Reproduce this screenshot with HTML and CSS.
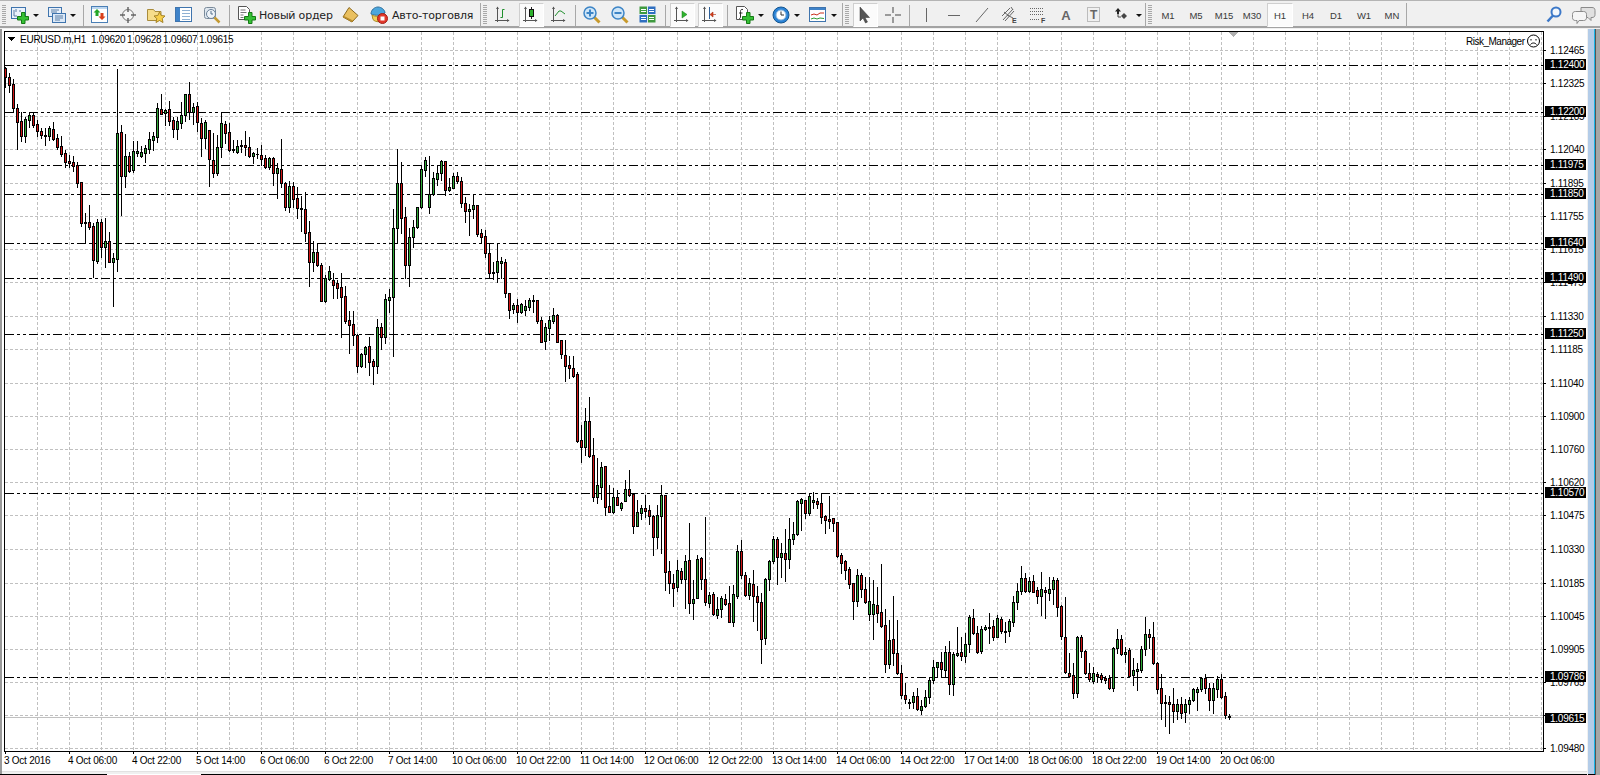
FILE: index.html
```html
<!DOCTYPE html>
<html lang="ru">
<head>
<meta charset="utf-8">
<title>EURUSD.m,H1</title>
<link rel="stylesheet" href="styles.css">
</head>
<body>
<svg class="defs" aria-hidden="true">
  <defs>
    <path id="plus" d="M10.500 6.500h3.500v4h3.500v3.500h-3.500v3.500h-3.500v-3.500h-4v-3.500h4z" fill="#35c035" stroke="#157a15"/>
    <symbol id="i-new" viewBox="0 0 18 18"><rect x="0.500" y="1.500" width="14" height="11" fill="#eaf2fb" stroke="#3f74ad"/><path d="M3 4v6h3M5 3v3M9 4v2" fill="none" stroke="#5b7fa5"/><use href="#plus"/></symbol>
    <symbol id="i-prof" viewBox="0 0 18 18"><rect x="0.500" y="1.500" width="13" height="9" fill="#e6effa" stroke="#3f74ad"/><rect x="4.500" y="7.500" width="13" height="9" fill="#dbe8f7" stroke="#3f74ad"/><path d="M3 4h8M3 6h6M7 10h8M7 12h8M7 14h5" stroke="#5b7fa5"/></symbol>
    <symbol id="i-watch" viewBox="0 0 18 18"><rect x="0.500" y="0.500" width="16" height="16" fill="#fff" stroke="#4a7fb5"/><path d="M1 1h15v2H1z" fill="#bcd6f0"/><path d="M6 3l3.500 3.500H7.500V10h-3V6.500h-2z" fill="#26a626"/><path d="M11 14l-3.500-3.500h2V7h3v3.500h2z" fill="#d9401a"/></symbol>
    <symbol id="i-nav" viewBox="0 0 18 18"><circle cx="9" cy="9" r="5.500" fill="#f6f6f6" stroke="#777"/><path d="M9 1v5M9 12v5M1 9h5M12 9h5" stroke="#666" stroke-width="1.500"/></symbol>
    <symbol id="i-fav" viewBox="0 0 18 18"><path d="M.5 3.500h6l1.500 2h6v9H.5z" fill="#f6dd8a" stroke="#a98c3c"/><path d="M12.500 6l1.700 3.500 3.800.5-2.800 2.600.8 3.900-3.500-2-3.500 2 .8-3.900L7 10l3.800-.5z" fill="#f7cf4a" stroke="#a58326"/></symbol>
    <symbol id="i-term" viewBox="0 0 18 18"><rect x="0.500" y="1.500" width="16" height="14" fill="#fff" stroke="#3f74ad"/><rect x="1" y="2" width="4" height="13" fill="#3f83c9"/><path d="M7 4.500h8M7 7.500h8M7 10.500h8M7 13.500h8" stroke="#8fb0d2"/></symbol>
    <symbol id="i-test" viewBox="0 0 18 18"><rect x="1.500" y="1.500" width="11" height="11" rx="2" fill="#dfe7ef" stroke="#7a8a9a"/><circle cx="8" cy="8" r="4.500" fill="#eef3f8" stroke="#6b8098"/><path d="M8 5v3h2" stroke="#56708c" fill="none"/><path d="M11.500 11.500l5 5" stroke="#c49a32" stroke-width="2.500"/></symbol>
    <symbol id="i-order" viewBox="0 0 18 18"><path d="M.5.500h8l3 3v10H.5z" fill="#fff" stroke="#555"/><path d="M2.500 4h5M2.500 6.500h6M2.500 9h3M2.500 11.500h3" stroke="#777"/><use href="#plus"/></symbol>
    <symbol id="i-gold" viewBox="0 0 18 18"><path d="M7 1.500l9 8-6 6.500-9-5z" fill="#eac060" stroke="#8d6a1e"/><path d="M1 11l9 5 1-1.500-9-4.500z" fill="#b98d2c"/></symbol>
    <symbol id="i-auto" viewBox="0 0 18 18"><path d="M1 8c0-4 3.500-7 7-7s7 3 7 6c-3 2.500-10 3-14 1z" fill="#4ca6dc" stroke="#2d6f9d"/><path d="M2 9c3 2 8 1.500 12-.5l.5 5c-3 3-9 3-11.500 0z" fill="#f1cf58" stroke="#a88a25"/><circle cx="12.500" cy="12.500" r="5" fill="#e2382b" stroke="#a21d15"/><rect x="10.500" y="10.500" width="4" height="4" fill="#fff"/></symbol>
    <g id="axes"><path d="M3.500 1v15M1 14.500h14" stroke="#555" fill="none"/><path d="M2 3l1.500-2.500L5 3zM13 13l2.500 1.500L13 16z" fill="#555"/></g>
    <symbol id="i-bars" viewBox="0 0 18 18"><use href="#axes"/><path d="M8.500 3.500v8M6.500 11.500h2M8.500 3.500h2" stroke="#1f8f2c" fill="none"/></symbol>
    <symbol id="i-candle" viewBox="0 0 18 18"><use href="#axes"/><path d="M9.500 1v12" stroke="#222"/><rect x="7.500" y="3.500" width="4" height="7" fill="#2fb32f" stroke="#111"/></symbol>
    <symbol id="i-line" viewBox="0 0 18 18"><use href="#axes"/><path d="M5 10l4-5 2 0 4 3" stroke="#1f8f2c" fill="none"/></symbol>
    <symbol id="i-zin" viewBox="0 0 18 18"><path d="M10.500 10.500l6 6" stroke="#c89a2c" stroke-width="3"/><circle cx="7" cy="7" r="6" fill="#cfe6f8" stroke="#3d85c6" stroke-width="1.500"/><path d="M3.500 7h7M7 3.500v7" stroke="#3d85c6" stroke-width="2"/></symbol>
    <symbol id="i-zout" viewBox="0 0 18 18"><path d="M10.500 10.500l6 6" stroke="#c89a2c" stroke-width="3"/><circle cx="7" cy="7" r="6" fill="#cfe6f8" stroke="#3d85c6" stroke-width="1.500"/><path d="M3.500 7h7" stroke="#3d85c6" stroke-width="2"/></symbol>
    <symbol id="i-tile" viewBox="0 0 18 18"><rect x="0.500" y="0.500" width="8" height="8" fill="#3f9a3f"/><rect x="8.500" y="0.500" width="8" height="8" fill="#2f6fc0"/><rect x="0.500" y="8.500" width="8" height="8" fill="#2f6fc0"/><rect x="8.500" y="8.500" width="8" height="8" fill="#3f9a3f"/><path d="M2 5.500h5M10 5.500h5M2 13.500h5M10 13.500h5M2 3.500h5M10 3.500h5M2 11.500h5M10 11.500h5" stroke="#fff"/><path d="M8.500 0v17M0 8.500h17" stroke="#dfe8f0"/></symbol>
    <symbol id="i-scroll" viewBox="0 0 18 18"><use href="#axes"/><path d="M9 5l5 3.500L9 12z" fill="#2fb32f" stroke="#157a15" stroke-width=".5"/></symbol>
    <symbol id="i-shift" viewBox="0 0 18 18"><use href="#axes"/><path d="M8.500 1v12" stroke="#2d5f98"/><path d="M15 8.500h-3V6l-3 2.500L12 11V8.500" fill="#d6401c" stroke="#a82a10" stroke-width=".6"/></symbol>
    <symbol id="i-ind" viewBox="0 0 18 18"><path d="M.5.500h8l3 3v10H.5z" fill="#fff" stroke="#555"/><path d="M7 3.500c-2-.5-2.500.5-2.500 2v5.500c0 1-.5 1.500-1.500 1.500M3 7h3.500" fill="none" stroke="#333"/><use href="#plus"/></symbol>
    <symbol id="i-clock" viewBox="0 0 18 18"><circle cx="9" cy="9" r="8" fill="#2b83d6" stroke="#14558f"/><circle cx="9" cy="9" r="5" fill="#fff" stroke="#8ab6dc"/><path d="M9 5.500V9h3" fill="none" stroke="#333"/></symbol>
    <symbol id="i-tmpl" viewBox="0 0 18 18"><rect x="0.500" y="1.500" width="16" height="14" fill="#fff" stroke="#3f74ad"/><rect x="1" y="2" width="15" height="2" fill="#3f83c9"/><path d="M2 9l3-1 3 1 3-2 4 0" fill="none" stroke="#c9301c"/><path d="M2 13l3-1 3 1 3-1 4 .5" fill="none" stroke="#2e9a36"/></symbol>
    <symbol id="i-cursor" viewBox="0 0 18 18"><path d="M4 1v14l3-3 2.500 5 2-1-2.500-4.500h4.500z" fill="#555" stroke="#333" stroke-width=".5"/></symbol>
    <symbol id="i-cross" viewBox="0 0 18 18"><path d="M9 1v6M9 11v6M1 9h6M11 9h6" stroke="#444" fill="none"/></symbol>
    <symbol id="i-vline" viewBox="0 0 18 18"><path d="M9.500 2v14" stroke="#666"/></symbol>
    <symbol id="i-hline" viewBox="0 0 18 18"><path d="M3 9.500h12" stroke="#666"/></symbol>
    <symbol id="i-trend" viewBox="0 0 18 18"><path d="M3 16L15 2" stroke="#666"/></symbol>
    <symbol id="i-chan" viewBox="0 0 18 18"><path d="M1 10l8-8M2 14l10-11M4 15l9-10M6 9l6 3M3 6l5 4M10 1l2 3" stroke="#666" fill="none"/><text class="icon-letter" x="11" y="17">E</text></symbol>
    <symbol id="i-fibo" viewBox="0 0 18 18"><path d="M1 2.500h14M1 5.500h14M1 8.500h14M1 13.500h10" stroke="#666" stroke-dasharray="1 1"/><text class="icon-letter" x="12" y="17">F</text></symbol>
    <symbol id="i-ttext" viewBox="0 0 18 18"><rect x="2.500" y="1.500" width="12" height="14" fill="none" stroke="#888" stroke-dasharray="1 1"/><text class="icon-t" x="5" y="13">T</text></symbol>
    <symbol id="i-arrows" viewBox="0 0 18 18"><path d="M3 1l3 3.500H4V7H2V4.500H0z" fill="#222" transform="translate(1 1)"/><path d="M8 7l3 3-3 3-3-3z" fill="#444" transform="translate(2)"/><path d="M3 8v3h3" stroke="#444" fill="none" transform="translate(1)"/></symbol>
    <symbol id="i-search" viewBox="0 0 18 18"><circle cx="11" cy="6" r="4.500" fill="#f2f7fc" stroke="#3c78c8" stroke-width="2"/><path d="M8 9.500L2.500 15.500" stroke="#3c78c8" stroke-width="2.500"/></symbol>
    <symbol id="i-chat" viewBox="0 0 24 18"><path d="M9 1.500h11c2 0 3 1 3 3v4c0 2-1 3-3 3h-1v3l-3-3H9z" fill="#e0e0e0" stroke="#8a8a8a"/><path d="M3.500 5.500h8c2 0 3 1 3 3v3c0 2-1 3-3 3H7l-2 3v-3H3.500c-2 0-3-1-3-3v-3c0-2 1-3 3-3z" fill="#f6f6f6" stroke="#8a8a8a"/></symbol>
  </defs>
</svg>

<header class="toolbar">
  <div class="band">
    <span class="grip"></span>
    <span class="tool drop d37"><svg class="ic"><use href="#i-new"/></svg><i class="caret"></i></span>
    <span class="tool drop d36"><svg class="ic"><use href="#i-prof"/></svg><i class="caret"></i></span>
    <span class="sep"></span>
    <span class="tool"><svg class="ic"><use href="#i-watch"/></svg></span>
    <span class="tool"><svg class="ic"><use href="#i-nav"/></svg></span>
    <span class="tool"><svg class="ic"><use href="#i-fav"/></svg></span>
    <span class="tool"><svg class="ic"><use href="#i-term"/></svg></span>
    <span class="tool"><svg class="ic"><use href="#i-test"/></svg></span>
    <span class="sep wide"></span>
    <span class="text-tool order"><svg class="ic"><use href="#i-order"/></svg>Новый ордер</span>
    <span class="tool"><svg class="ic"><use href="#i-gold"/></svg></span>
    <span class="text-tool auto"><svg class="ic"><use href="#i-auto"/></svg>Авто-торговля</span>
  </div>
  <div class="band">
    <span class="grip"></span>
    <span class="tool"><svg class="ic"><use href="#i-bars"/></svg></span>
    <span class="tool on"><svg class="ic"><use href="#i-candle"/></svg></span>
    <span class="tool"><svg class="ic"><use href="#i-line"/></svg></span>
    <span class="sep"></span>
    <span class="tool"><svg class="ic"><use href="#i-zin"/></svg></span>
    <span class="tool"><svg class="ic"><use href="#i-zout"/></svg></span>
    <span class="tool"><svg class="ic"><use href="#i-tile"/></svg></span>
    <span class="sep wide"></span>
    <span class="tool on"><svg class="ic"><use href="#i-scroll"/></svg></span>
    <span class="tool on"><svg class="ic"><use href="#i-shift"/></svg></span>
    <span class="sep wide"></span>
    <span class="tool drop d36 p7"><svg class="ic"><use href="#i-ind"/></svg><i class="caret"></i></span>
    <span class="tool drop d37 p7"><svg class="ic"><use href="#i-clock"/></svg><i class="caret"></i></span>
    <span class="tool drop d39 p7"><svg class="ic"><use href="#i-tmpl"/></svg><i class="caret"></i></span>
  </div>
  <div class="band">
    <span class="grip"></span>
    <span class="tool on"><svg class="ic"><use href="#i-cursor"/></svg></span>
    <span class="tool"><svg class="ic"><use href="#i-cross"/></svg></span>
    <span class="sep"></span>
    <span class="tool"><svg class="ic"><use href="#i-vline"/></svg></span>
    <span class="tool"><svg class="ic"><use href="#i-hline"/></svg></span>
    <span class="tool"><svg class="ic"><use href="#i-trend"/></svg></span>
    <span class="tool"><svg class="ic"><use href="#i-chan"/></svg></span>
    <span class="tool"><svg class="ic"><use href="#i-fibo"/></svg></span>
    <span class="tool letter">A</span>
    <span class="tool"><svg class="ic"><use href="#i-ttext"/></svg></span>
    <span class="tool drop d37 p7"><svg class="ic"><use href="#i-arrows"/></svg><i class="caret"></i></span>
  </div>
  <div class="band">
    <span class="grip"></span>
    <span class="tool tf">M1</span>
    <span class="tool tf">M5</span>
    <span class="tool tf">M15</span>
    <span class="tool tf">M30</span>
    <span class="tool tf on">H1</span>
    <span class="tool tf">H4</span>
    <span class="tool tf">D1</span>
    <span class="tool tf">W1</span>
    <span class="tool tf">MN</span>
  </div>
  <div class="help">
    <svg class="ic"><use href="#i-search"/></svg>
    <svg class="ic chat"><use href="#i-chat"/></svg>
  </div>
</header>

<main class="workspace">
  <div class="edge"></div>
  <div class="center">
    <svg class="chart" viewBox="2 29 1585 743" width="1585" height="743">
      <rect class="bg" x="2" y="29" width="1585" height="743"/>
      <g id="grid"></g>
      <path class="frame" d="M4.500 31.500H1543.500V751.500H4.500Z"/>
      <path class="frame" d="M5 751v3M69 751v3M133 751v3M197 751v3M261 751v3M325 751v3M389 751v3M453 751v3M517 751v3M581 751v3M645 751v3M709 751v3M773 751v3M837 751v3M901 751v3M965 751v3M1029 751v3M1093 751v3M1157 751v3M1221 751v3"/>
      <path class="frame" d="M1543 50.500h3M1543 83.500h3M1543 116.500h3M1543 149.500h3M1543 183.500h3M1543 216.500h3M1543 249.500h3M1543 282.500h3M1543 316.500h3M1543 349.500h3M1543 383.500h3M1543 416.500h3M1543 449.500h3M1543 482.500h3M1543 515.500h3M1543 549.500h3M1543 583.500h3M1543 616.500h3M1543 649.500h3M1543 682.500h3M1543 715.500h3M1543 748.500h3"/>
      <path class="level" d="M5 65.500H1543M5 112.500H1543M5 165.500H1543M5 194.500H1543M5 243.500H1543M5 278.500H1543M5 334.500H1543M5 493.500H1543M5 677.500H1543"/>
      <path class="ask" d="M5 717.500H1543"/>
      <g id="candles"></g>
      <path class="shift" d="M1229 32h9l-4.500 5z"/>

      <g class="txt">
        <path class="menu" d="M8 37h7l-3.500 4z"/>
        <text x="20" y="42.500">EURUSD.m,H1</text>
        <text x="91" y="42.500">1.09620</text>
        <text x="127" y="42.500">1.09628</text>
        <text x="163" y="42.500">1.09607</text>
        <text x="199" y="42.500">1.09615</text>
        <text class="risk" x="1466" y="44.500">Risk_Manager</text>
      </g>
      <g class="face">
        <circle cx="1533.500" cy="41" r="6"/>
        <path d="M1531 39v1.500M1536 39v1.500M1530.500 44.500c1.500-2 4.500-2 6 0"/>
      </g>

      <g class="txt">
        <text x="1550" y="54">1.12465</text>
        <text x="1550" y="87">1.12325</text>
        <text x="1550" y="120">1.12185</text>
        <text x="1550" y="153">1.12040</text>
        <text x="1550" y="187">1.11895</text>
        <text x="1550" y="220">1.11755</text>
        <text x="1550" y="253">1.11615</text>
        <text x="1550" y="286">1.11475</text>
        <text x="1550" y="320">1.11330</text>
        <text x="1550" y="353">1.11185</text>
        <text x="1550" y="387">1.11040</text>
        <text x="1550" y="420">1.10900</text>
        <text x="1550" y="453">1.10760</text>
        <text x="1550" y="486">1.10620</text>
        <text x="1550" y="519">1.10475</text>
        <text x="1550" y="553">1.10330</text>
        <text x="1550" y="587">1.10185</text>
        <text x="1550" y="620">1.10045</text>
        <text x="1550" y="653">1.09905</text>
        <text x="1550" y="686">1.09765</text>
        <text x="1550" y="752">1.09480</text>
      </g>

      <g class="tags">
        <rect x="1545" y="59" width="41" height="11"/><text x="1550" y="68">1.12400</text>
        <rect x="1545" y="106" width="41" height="11"/><text x="1550" y="115">1.12200</text>
        <rect x="1545" y="159" width="41" height="11"/><text x="1550" y="168">1.11975</text>
        <rect x="1545" y="188" width="41" height="11"/><text x="1550" y="197">1.11850</text>
        <rect x="1545" y="237" width="41" height="11"/><text x="1550" y="246">1.11640</text>
        <rect x="1545" y="272" width="41" height="11"/><text x="1550" y="281">1.11490</text>
        <rect x="1545" y="328" width="41" height="11"/><text x="1550" y="337">1.11250</text>
        <rect x="1545" y="487" width="41" height="11"/><text x="1550" y="496">1.10570</text>
        <rect x="1545" y="671" width="41" height="11"/><text x="1550" y="680">1.09786</text>
        <rect x="1545" y="713" width="41" height="10"/><text x="1550" y="721.500">1.09615</text>
      </g>

      <g class="txt">
        <text x="4" y="764">3 Oct 2016</text>
        <text x="68" y="764">4 Oct 06:00</text>
        <text x="132" y="764">4 Oct 22:00</text>
        <text x="196" y="764">5 Oct 14:00</text>
        <text x="260" y="764">6 Oct 06:00</text>
        <text x="324" y="764">6 Oct 22:00</text>
        <text x="388" y="764">7 Oct 14:00</text>
        <text x="452" y="764">10 Oct 06:00</text>
        <text x="516" y="764">10 Oct 22:00</text>
        <text x="580" y="764">11 Oct 14:00</text>
        <text x="644" y="764">12 Oct 06:00</text>
        <text x="708" y="764">12 Oct 22:00</text>
        <text x="772" y="764">13 Oct 14:00</text>
        <text x="836" y="764">14 Oct 06:00</text>
        <text x="900" y="764">14 Oct 22:00</text>
        <text x="964" y="764">17 Oct 14:00</text>
        <text x="1028" y="764">18 Oct 06:00</text>
        <text x="1092" y="764">18 Oct 22:00</text>
        <text x="1156" y="764">19 Oct 14:00</text>
        <text x="1220" y="764">20 Oct 06:00</text>
      </g>
      <path class="rule" d="M2 771.500H1587"/>
    </svg>
    <div class="tabs"><span class="tab-line first"></span><span class="tab-gap"></span><span class="tab-line"></span></div>
  </div>
  <div class="rail"><span class="rail-blue"></span><span class="rail-cyan"></span><span class="rail-gray"></span></div>
</main>
<script src="chart.js"></script>
</body>
</html>
```
FILE: styles.css
```css
* { box-sizing: border-box; }
html, body { margin: 0; padding: 0; }
body {
  width: 1600px;
  height: 775px;
  overflow: hidden;
  background: #f0f0f0;
  font-family: "Liberation Sans", Arial, sans-serif;
  display: flex;
  flex-direction: column;
}
.defs { position: absolute; width: 0; height: 0; }
.icon-letter { font: 700 7px "Liberation Sans", sans-serif; fill: #444; }
.icon-t { font: 700 12px "Liberation Sans", sans-serif; fill: #666; }

.toolbar {
  flex: none;
  height: 29px;
  display: flex;
  align-items: stretch;
  padding: 2px 0 1px;
  background: #f0f0f0;
  border-top: 1px solid #b4b4b4;
  box-shadow: inset 0 -2px 0 #a3a3a3;
  border-bottom: 1px solid #f0f0f0;
}
.band {
  display: flex;
  align-items: center;
  height: 24px;
  border-right: 1px solid #a8a8a8;
}
.grip {
  flex: none;
  width: 8px;
  height: 20px;
  background: repeating-linear-gradient(#a8a8a8 0 1px, transparent 1px 2px) 2px 0 / 4px 100% no-repeat;
}
.tool {
  flex: none;
  width: 28px;
  height: 24px;
  display: flex;
  align-items: center;
  justify-content: center;
  color: #333;
}
.ic { width: 18px; height: 18px; flex: none; display: block; }
.tool.on {
  background: #fbfbfb;
  border: 1px solid;
  border-color: #cfcfcf #fff #fff #cfcfcf;
  margin: 0 1.500px;
  width: 25px;
}
.tool.drop { justify-content: flex-start; padding-left: 3px; }
.tool.d36 { width: 36px; }
.tool.d37 { width: 37px; }
.tool.d39 { width: 39px; }
.tool.p7 { padding-left: 6px; }
.caret {
  flex: none;
  margin-left: 4px;
  border: 3px solid transparent;
  border-top: 3px solid #111;
  border-bottom: 0;
}
.sep {
  flex: none;
  width: 1px;
  height: 21px;
  margin: 0 2px;
  background: #a8a8a8;
}
.sep.wide { margin-left: 3px; }
.text-tool {
  flex: none;
  display: flex;
  align-items: center;
  height: 24px;
  font: 11px "DejaVu Sans", sans-serif;
  letter-spacing: -0.2px;
  color: #222;
  white-space: nowrap;
}
.order { width: 105px; padding-left: 6px; gap: 3px; }
.auto { width: 115px; padding-left: 5px; gap: 4px; }
.letter { font: 700 13px "Liberation Sans", sans-serif; color: #666; }
.tf { font-size: 9.500px; color: #3a3a3a; }
.tf.on { width: 26px; margin: 0 1px; }
.help {
  flex: 1;
  display: flex;
  justify-content: flex-end;
  align-items: center;
  gap: 9px;
  padding-right: 4px;
  height: 24px;
}
.chat { width: 24px; }

.workspace { flex: 1; display: flex; min-height: 0; }
.edge {
  flex: none;
  width: 2px;
  background: #9a9a9a;
  border-bottom: 1px solid #000;
}
.center { flex: none; width: 1585px; display: flex; flex-direction: column; }
.chart { display: block; flex: none; shape-rendering: crispEdges; }
.bg { fill: #fff; }
.grid { fill: none; stroke: #c0c0c0; stroke-dasharray: 3 2; }
.frame { fill: none; stroke: #000; }
.level { fill: none; stroke: #000; stroke-dasharray: 9 3 3 3 3 3; }
.ask { fill: none; stroke: #c0c0c0; }
.shift { fill: #b0b0b0; }
.menu { fill: #000; }
.rule { stroke: #e2e2e2; fill: none; }
.wick { fill: none; stroke: #000; }
.fill-g { fill: none; stroke: #2fa836; }
.fill-r { fill: none; stroke: #d01414; }
.txt text {
  font: 10px "Liberation Sans", Arial, sans-serif;
  letter-spacing: -0.25px;
  fill: #000;
}
.txt text.risk { letter-spacing: -0.5px; }
.tags rect { fill: #000; }
.tags text {
  font: 10px "Liberation Sans", Arial, sans-serif;
  letter-spacing: -0.25px;
  fill: #fff;
}
.face { fill: none; stroke: #000; shape-rendering: auto; }
.tabs { flex: none; height: 3px; display: flex; align-items: flex-end; background: #f0f0f0; }
.tab-line { height: 1px; background: #000; flex: 1; }
.tab-line.first { flex: none; width: 105px; }
.tab-gap { flex: none; width: 94px; height: 1px; background: #fff; }
.rail { flex: none; width: 13px; display: flex; border-left: 1px solid #f0f0f0; }
.rail-blue { flex: none; width: 6px; background: #b3cce8; border-bottom: 1px solid #000; }
.rail-cyan { flex: none; width: 1px; background: #19b4e8; border-bottom: 1px solid #000; }
.rail-gray { flex: 1; background: #a6a6a6; border-left: 1px solid #555; }
```
FILE: chart.js
```js
// Candles transcribed as [high, bodyTop, bodyBottom, low, colour]; each block has its own vertical origin.
var blocks = [
  { y0: 60, rows: [
    [22,24,52,82,'r'],[40,52,74,95,'r'],[58,72,143,157,'r'],[132,145,185,267,'r'],[157,184,228,243,'r'],
    [170,178,228,245,'g'],[160,165,180,200,'g'],[160,165,195,200,'r'],[180,193,213,228,'r'],[205,213,225,233,'r'],
    [205,225,229,255,'r'],[198,205,228,240,'g'],[187,208,238,240,'r'],[223,235,261,268,'r'],[229,259,282,287,'r'],
    [270,279,305,320,'r'],[285,304,309,320,'r'],[287,307,318,332,'r'],[307,316,368,380,'r'],[367,367,488,497,'r'],
    [460,486,489,550,'r'],[436,487,500,508,'r'],[490,498,600,650,'r'],[478,486,602,610,'g'],[478,487,560,590,'r'],
    [474,544,560,620,'g'],[515,544,605,605,'r'],[580,595,605,738,'g'],[28,220,596,632,'g'],[196,217,347,465,'r'],
    [222,289,347,382,'g'],[275,289,333,335,'r'],[243,274,329,335,'g'],[243,274,278,287,'g'],[258,277,288,292,'g'],
    [255,265,278,305,'g'],[215,238,266,278,'g'],[215,229,239,270,'g'],[128,145,230,245,'g'],[102,148,161,162,'r'],
    [148,151,160,195,'g'],[124,148,182,195,'r'],[170,181,206,230,'r'],[170,184,206,237,'g'],[127,165,188,203,'g'],
    [102,102,165,182,'g'],[67,102,155,177,'r'],[128,142,157,192,'g'],[125,139,187,212,'r'],[175,190,235,288,'r'],
    [180,187,233,265,'g'],[210,211,298,378,'r'],[220,301,338,350,'r'],[225,262,338,345,'g'],[157,190,262,290,'g'],
    [184,193,220,250,'r'],[190,217,270,272,'r'],[240,268,270,275,'g'],[240,259,277,278,'g'],[240,256,259,275,'g'],
    [213,256,262,285,'r'],[230,262,288,292,'r'],[275,280,287,308,'g'],[265,281,283,295,'r'],[255,284,298,315,'r'],
    [285,295,320,323,'r'],[290,295,322,328,'g'],[290,295,338,375,'r'],[310,325,338,413,'g'],[238,328,368,380,'r'],
    [365,370,440,450,'r'],[362,378,440,455,'g'],[365,378,418,440,'r'],[380,415,445,473,'r']
  ]},
  { y0: 140, rows: [
    [168,205,208,272,'r'],[157,208,278,302,'r'],[243,277,365,437,'r'],[304,337,365,392,'g'],[310,337,375,378,'r'],
    [370,376,482,482,'r'],[405,415,483,485,'g'],[378,393,416,420,'g'],[400,420,434,475,'r'],[420,430,443,475,'r'],
    [400,441,470,590,'r'],[438,468,543,550,'r'],[513,541,554,640,'r'],[513,553,586,615,'r'],[583,586,677,695,'r'],
    [640,642,678,682,'g'],[618,621,643,680,'g'],[590,618,665,705,'r'],[658,663,677,733,'r'],[538,562,677,700,'g'],
    [548,562,592,627,'r'],[463,478,592,610,'g'],[448,472,479,515,'g'],[208,265,472,647,'g'],[28,130,265,305,'g'],
    [66,130,235,280,'r'],[200,232,376,415,'r'],[265,291,374,437,'g'],[240,262,292,320,'g'],[200,202,262,265,'g'],
    [75,88,200,203,'g'],[52,61,91,108,'g'],[48,163,200,218,'g'],[96,115,163,165,'g'],[75,100,116,135,'g'],
    [60,64,100,120,'g'],[62,64,150,165,'r'],[115,142,149,152,'g'],[100,109,143,145,'g'],[97,109,124,130,'r'],
    [112,124,190,200,'r'],[172,190,212,245,'r'],[193,208,212,285,'g'],[163,196,208,233,'g'],[195,196,283,288,'r'],
    [268,280,290,310,'r'],[270,289,340,352,'r'],[310,340,400,415,'r'],[365,396,400,416,'g'],[310,364,397,425,'g'],
    [350,364,368,415,'g'],[358,367,460,470,'r'],[458,460,510,533,'r'],[490,496,508,520,'g'],[478,496,515,545,'r'],
    [488,493,515,520,'g'],[480,499,509,525,'g'],[473,481,500,510,'g'],[465,481,483,515,'g'],[480,481,542,550,'r'],
    [530,541,607,607,'r'],[550,562,604,627,'g'],[528,541,563,600,'g'],[503,526,544,550,'g'],[523,525,605,605,'r']
  ]},
  { y0: 340, rows: [
    [0,0,43,55,'r'],[0,46,77,122,'r'],[48,76,85,115,'r'],[48,85,107,110,'r'],
    [95,103,302,305,'r'],[255,301,320,365,'r'],[205,244,320,345,'g'],[172,244,347,350,'r'],[295,346,470,482,'r'],
    [355,436,470,488,'g'],[367,382,440,478,'g'],[378,379,500,525,'r'],[435,499,515,517,'r'],[445,472,515,518,'g'],
    [450,471,494,495,'r'],[487,490,503,510,'g'],[420,448,482,483,'g'],[390,448,465,467,'r'],[460,463,557,578,'r'],
    [480,517,557,558,'g'],[495,505,518,537,'g'],[465,505,512,530,'r'],[495,511,527,552,'r'],[525,527,590,645,'r'],
    [495,526,590,625,'g'],[435,466,527,640,'g'],[465,466,695,750,'r'],[663,694,730,758,'r'],[702,730,743,798,'r'],
    [660,691,742,752,'g'],[685,693,716,730,'r'],[645,664,716,804,'g'],[548,661,790,818,'r'],[720,778,790,836,'g'],
    [645,656,775,775,'g'],[650,655,716,747,'r'],[530,716,785,795,'r'],[755,766,788,800,'g'],[755,763,823,825,'r'],
    [770,808,824,833,'g'],[768,775,808,830,'g'],[762,777,793,795,'r'],[738,790,845,846,'r'],[735,763,845,858,'g'],
    [615,634,767,775,'g'],[600,634,704,715,'r'],[695,704,764,768,'r'],[715,730,764,778,'g'],[690,733,768,842,'r'],
    [738,769,785,870,'r'],[760,785,898,968,'r'],[715,716,895,912,'g'],[660,664,716,750,'g'],[587,598,664,670,'g'],
    [590,598,650,732,'r'],[610,640,650,710,'g'],[568,640,658,722,'r'],[535,598,658,683,'g'],[547,583,596,612,'g'],
    [480,484,583,585,'g'],[475,478,488,570,'g'],[480,481,518,535,'r'],[460,468,518,525,'g'],[457,481,485,505,'g'],
    [475,484,492,505,'r'],[460,490,530,548,'r'],[525,528,540,578,'r'],[468,538,542,565,'r'],[533,535,548,572,'r'],
    [545,547,648,652,'r'],[640,646,668,698,'r'],[660,663,689,718,'r'],[680,688,732,745,'r'],[730,730,782,836,'r'],
    [688,706,782,798,'g']
  ]},
  { y0: 540, rows: [
    [100,105,147,172,'r'],[110,147,185,190,'r'],[110,183,222,240,'g'],[120,193,222,297,'g'],[140,195,218,245,'r'],
    [72,217,258,262,'r'],[208,256,373,395,'r'],[240,300,373,385,'g'],[167,298,340,375,'r'],[240,340,400,402,'r'],
    [375,400,465,475,'r'],[430,466,477,490,'r'],[478,487,490,503,'g'],[455,469,487,503,'g'],[445,469,508,510,'r'],
    [480,497,510,522,'g'],[450,472,497,500,'g'],[415,421,472,490,'g'],[360,382,421,428,'g'],[365,365,382,412,'g'],
    [335,367,388,412,'r'],[318,337,390,412,'g'],[302,335,433,462,'r'],[335,343,433,465,'g'],[262,338,344,348,'g'],
    [290,337,347,360,'r'],[280,313,347,366,'g'],[225,232,313,335,'g'],[208,235,280,283,'r'],[258,280,335,338,'r'],
    [258,268,332,340,'g'],[255,260,268,270,'g'],[218,260,263,310,'g'],[240,258,290,300,'r'],[225,235,290,292,'g'],
    [230,237,272,278,'r'],[245,272,276,305,'g'],[238,243,272,287,'g'],[168,187,245,258,'g'],[130,152,187,208,'g'],
    [78,115,152,162,'g'],[100,115,152,157,'r'],[110,122,152,155,'g'],[105,122,155,157,'r'],[140,150,167,190,'r'],
    [95,148,167,225,'g'],[140,150,157,233,'r'],[110,147,160,180,'g'],[110,120,147,192,'g'],[113,120,200,228,'r'],
    [195,198,287,296,'r'],[172,290,397,400,'r'],[340,398,408,412,'r'],[368,406,458,475,'r'],[288,290,458,470,'g'],
    [285,290,333,350,'r'],[330,333,398,402,'r'],[370,398,418,422,'r'],[380,400,422,428,'g'],[395,401,408,425,'r'],
    [400,405,418,425,'r'],[407,415,421,430,'r'],[405,415,443,448,'r'],[322,325,443,452,'g'],[268,297,325,340,'g'],
    [285,296,343,345,'r'],[320,335,343,365,'g'],[325,331,408,410,'r'],[355,390,405,435,'g'],[368,388,392,450,'g'],
    [318,327,390,395,'g'],[232,283,328,345,'g'],[268,283,290,325,'r'],[245,292,370,372,'r'],[365,370,447,458,'r'],
    [402,443,490,538,'r'],[465,485,490,558,'g'],[468,485,493,580,'r'],[445,493,512,545,'r'],[478,493,512,538,'g'],
    [470,493,518,535,'r'],[478,493,517,545,'g'],[470,480,493,520,'g'],[445,448,480,482,'g'],[440,448,457,510,'g'],
    [410,415,448,452,'g'],[403,415,445,460,'r'],[430,445,480,510,'r'],[430,445,481,518,'g'],[408,418,448,470,'g'],
    [403,418,470,473,'r'],[455,468,525,535,'r'],[522,527,532,536,'r']
  ]}
];

var NS = 'http://www.w3.org/2000/svg';
function addPath(parent, cls, d) {
  var p = document.createElementNS(NS, 'path');
  p.setAttribute('class', cls);
  p.setAttribute('d', d);
  parent.appendChild(p);
}

// grid
var gridD = '';
for (var gx = 37; gx < 1543; gx += 32) gridD += 'M' + (gx + 0.5) + ' 32V751';
[50,83,116,149,183,216,249,282,316,349,383,416,449,482,515,549,583,616,649,682,715,748].forEach(function (gy) {
  gridD += 'M5 ' + (gy + 0.5) + 'H1543';
});
addPath(document.getElementById('grid'), 'grid', gridD);

// candles
var black = '', green = '', red = '';
var index = 0;
blocks.forEach(function (block) {
  block.rows.forEach(function (c) {
    var x = 5 + 4 * index++;
    var px = x + 0.5;
    function Y(z) { return Math.round(block.y0 + z / 3); }
    var hi = Y(c[0]), top = Y(c[1]), bot = Y(c[2]), lo = Y(c[3]);
    black += 'M' + px + ' ' + hi + 'V' + (lo + 1);
    black += 'M' + (x - 0.5) + ' ' + top + 'V' + (bot + 1);
    black += 'M' + (x + 1.5) + ' ' + top + 'V' + (bot + 1);
    black += 'M' + px + ' ' + top + 'V' + (top + 1);
    black += 'M' + px + ' ' + bot + 'V' + (bot + 1);
    if (bot - top >= 2) {
      var seg = 'M' + px + ' ' + (top + 1) + 'V' + bot;
      if (c[4] === 'g') green += seg; else red += seg;
    }
  });
});
var layer = document.getElementById('candles');
addPath(layer, 'wick', black);
addPath(layer, 'fill-g', green);
addPath(layer, 'fill-r', red);
```
